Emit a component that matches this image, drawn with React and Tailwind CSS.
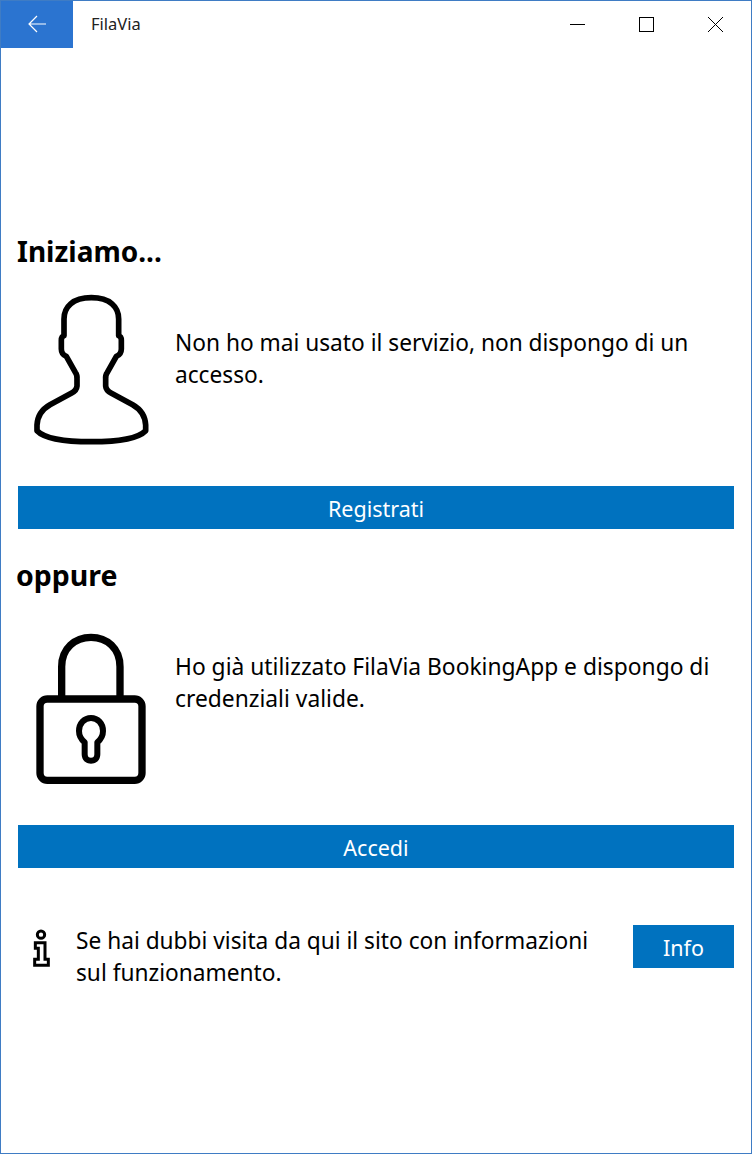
function PersonIcon() {
  return (
    <svg viewBox="24 0 450 510" className="w-[150px] h-[170px] shrink-0" fill="none" stroke="#000" strokeWidth="17" strokeLinejoin="round">
      <path d="M244 38C300 38 326 66 326 102L326 152Q334 154 334 166L334 192Q334 208 319 214L292 262Q286 270 287 282L287 303Q288 316 303 324L368 359Q405 380 407 420L407 437C385 460 320 470 244 470C168 470 103 460 81 437L81 420Q83 380 120 359L185 324Q200 316 201 303L201 282Q202 270 196 262L169 214Q154 208 154 192L154 166Q154 154 162 152L162 102C162 66 188 38 244 38Z" />
    </svg>
  );
}

function LockIcon() {
  return (
    <svg viewBox="24 -3 450 510" className="w-[150px] h-[170px] shrink-0" fill="none" stroke="#000" strokeLinejoin="round">
      <path strokeWidth="22" d="M155 220L155 125C155 70 195 37 243 37C291 37 330 70 330 125L330 220" />
      <rect x="90" y="222" width="306" height="244" rx="22" strokeWidth="22" />
      <path strokeWidth="18" d="M224 352L224 388C224 414 262 414 262 388L262 352C274 342 279 333 279 318C279 295 263 279 243 279C223 279 207 295 207 318C207 333 212 342 224 352Z" />
    </svg>
  );
}

function InfoIcon() {
  return (
    <svg viewBox="99 45 51 114" className="w-[17px] h-[38px] shrink-0" fill="#fff" stroke="#000" strokeWidth="9">
      <circle cx="123" cy="62" r="11" />
      <path d="M106 86L135 86L135 136L145 136L145 154L104 154L104 136L115 136L115 103L106 103Z" />
    </svg>
  );
}

function TitleBar() {
  return (
    <div className="flex items-center h-[47px] shrink-0">
      <div className="w-[72px] h-full pb-[2px] bg-[#2b74d0] flex items-center justify-center">
        <svg viewBox="0 0 18 18" className="w-[18px] h-[18px]" fill="none" stroke="#fff" strokeWidth="1.2">
          <path d="M18 9L1 9M9 1L1 9L9 17" />
        </svg>
      </div>
      <div className="ml-[18px] text-[16.5px] text-[#222]">FilaVia</div>
      <div className="ml-auto mr-px flex h-full">
        <div className="w-[69px] flex items-center justify-center">
          <div className="w-[15px] h-px bg-black" />
        </div>
        <div className="w-[69px] flex items-center justify-center">
          <div className="w-[15px] h-[15px] border border-black" />
        </div>
        <div className="w-[69px] flex items-center justify-center">
          <svg viewBox="0 0 15 15" className="w-[15px] h-[15px]" fill="none" stroke="#000">
            <path d="M0 0L15 15M15 0L0 15" />
          </svg>
        </div>
      </div>
    </div>
  );
}

function Choice({ icon, text, button, textClass }) {
  return (
    <div>
      <div className="flex items-center gap-[7px]">
        {icon}
        <p className={textClass}>{text}</p>
      </div>
      <button className="block w-full h-[43px] mt-[31px] pt-[3px] bg-[#0072bf] text-white text-[21.5px]">{button}</button>
    </div>
  );
}

export default function App() {
  return (
    <div className="w-[752px] h-[1154px] flex flex-col bg-white border border-[#3f7cc4] font-['Noto_Sans',sans-serif]">
      <TitleBar />
      <main className="pl-[17px] pr-[17px]">
        <h1 className="mt-[184px] h-[38px] text-[28px] leading-[38px] font-bold text-black -ml-px">Iniziamo...</h1>
        <div className="mt-[15px]">
          <Choice
            icon={<PersonIcon />}
            text="Non ho mai usato il servizio, non dispongo di un accesso."
            button="Registrati"
            textClass="flex-1 text-[22.7px] leading-[32px] pb-[22px] text-black"
          />
        </div>
        <h2 className="mt-[27px] h-[38px] text-[28.5px] leading-[38px] font-bold text-black -ml-[2px]">oppure</h2>
        <div className="mt-[30px]">
          <Choice
            icon={<LockIcon />}
            text="Ho già utilizzato FilaVia BookingApp e dispongo di credenziali valide."
            button="Accedi"
            textClass="flex-1 text-[22.8px] leading-[32px] pb-[52px] text-black"
          />
        </div>
        <div className="mt-[57px] flex items-start">
          <div className="ml-[15px] mt-[4px]">
            <InfoIcon />
          </div>
          <p className="ml-[26px] w-[525px] text-[22.7px] leading-[32px] text-black">
            Se hai dubbi visita da qui il sito con informazioni sul funzionamento.
          </p>
          <button className="ml-auto w-[101px] h-[43px] pt-[3px] bg-[#0072bf] text-white text-[21.5px]">Info</button>
        </div>
      </main>
    </div>
  );
}
